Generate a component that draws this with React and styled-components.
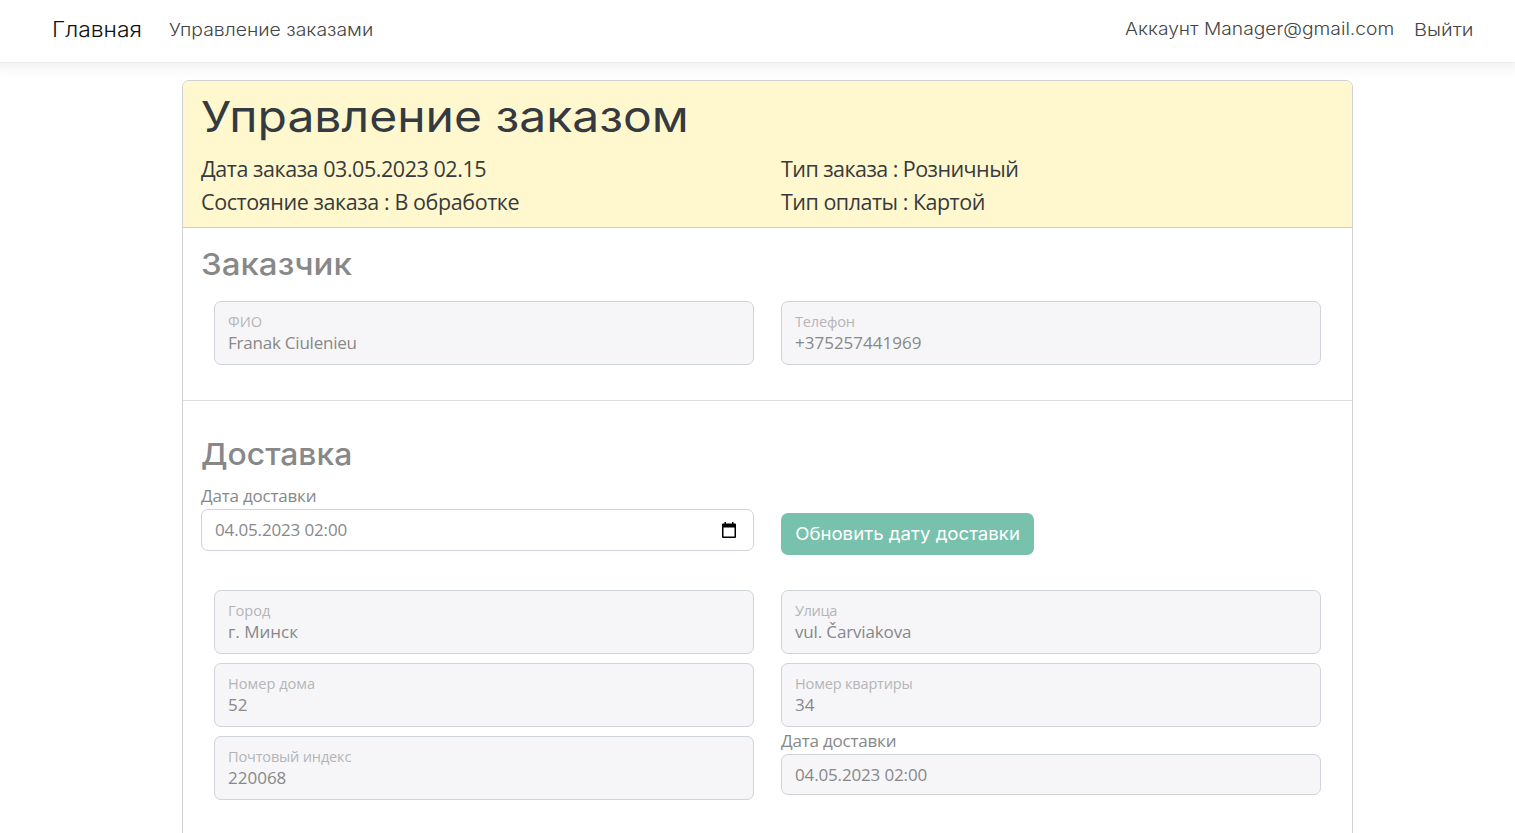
import React from "react";
import styled, { createGlobalStyle } from "styled-components";

const GlobalStyle = createGlobalStyle`
  * { box-sizing: border-box; }
  html, body { margin: 0; height: 833px; overflow: hidden; }
  body {
    background: #fff;
    color: #888;
    font-family: "Open Sans", "Noto Sans", sans-serif;
    font-size: 17px;
    line-height: 27px;
    white-space: nowrap;
  }
`;

const brandFont = `"Inter", "Open Sans", sans-serif`;

const Navbar = styled.header`
  display: flex;
  align-items: center;
  height: 63px;
  padding: 0 49.5px 3px 52px;
  border-bottom: 1px solid #ececec;
  box-shadow: 0 -4px 14px 8px rgba(0, 0, 0, 0.065);
  font-family: ${brandFont};
  font-weight: 300;
`;
const Brand = styled.a`
  margin-right: 34px;
  font-size: 21px;
  color: #111;
`;
const NavLink = styled.a`
  font-size: 17.5px;
  color: #444;
`;
const AccountLink = styled(NavLink)`
  margin-top: -1px;
`;
const NavRight = styled.nav`
  display: flex;
  gap: 43.3px;
  margin-left: auto;
`;

const Card = styled.main`
  width: 1171px;
  height: 780px;
  margin: 17px 0 0 182px;
  border: 1px solid #ced0d2;
  border-radius: 7px;
  background: #fff;
  overflow: hidden;
`;
const CardHeader = styled.div`
  height: 147px;
  padding: 8px 18px 9px;
  background: #fff8cf;
  border-bottom: 1px solid #d3ceac;
  color: #373a3c;
`;
const Title = styled.h1`
  margin: 0 0 9px;
  font: 400 43px/54px ${brandFont};
  color: #343a40;
`;
const Summary = styled.div`
  display: grid;
  grid-template-columns: 580px 1fr;
  font-size: 21.5px;
  line-height: 33px;
`;

const Section = styled.section`
  padding: ${(p) => p.$top}px 31px 35px 18px;
  border-bottom: 1px solid #dfdfdf;
`;
const Heading = styled.h2`
  margin: 0 0 9px;
  font: 460 30.5px/38px ${brandFont};
`;
const FieldGrid = styled.div`
  display: grid;
  grid-template-columns: 540px 540px;
  column-gap: 27px;
  row-gap: 9px;
  margin: ${(p) => p.$top}px 0 0 13px;
`;
const Field = styled.div`
  height: 64px;
  padding: 8px 13px;
  border: 1px solid #ced4da;
  border-radius: 7px;
  background: #f6f6f9;
`;
const FieldLabel = styled.div`
  font-size: 14.6px;
  line-height: 22px;
  color: #b5b5b6;
`;
const FieldValue = styled.div`
  line-height: 21px;
`;
const DateRow = styled.div`
  display: grid;
  grid-template-columns: 553px auto;
  column-gap: 27px;
  justify-content: start;
  align-items: start;
`;
const DateInput = styled.div`
  display: flex;
  align-items: center;
  justify-content: space-between;
  height: ${(p) => (p.$disabled ? 41 : 42)}px;
  padding: 0 16px 1px 13px;
  border: 1px solid #ced4da;
  border-radius: 7px;
  background: ${(p) => (p.$disabled ? "#f6f6f9" : "#fff")};
`;
const DateCell = styled.div`
  margin-top: ${(p) => p.$top || 0}px;
`;
const Button = styled.button`
  width: 253px;
  height: 42px;
  margin-top: 31px;
  padding: 0;
  border: 0;
  border-radius: 7px;
  background: #78c2ad;
  color: #fff;
  font: 400 17.5px/42px ${brandFont};
`;
const T = styled.span`
  letter-spacing: ${(p) => p.$ls || 0}px;
`;
const Wide = styled.span`
  display: inline-block;
  transform: scaleX(${(p) => p.$k});
  transform-origin: ${(p) => (p.$center ? "center" : "left")};
`;

const CalendarIcon = () => (
  <svg width="16" height="18" viewBox="0 0 16 18">
    <path
      d="M2 2.5h12a1 1 0 0 1 1 1V16a1 1 0 0 1-1 1H2a1 1 0 0 1-1-1V3.500a1 1 0 0 1 1-1z M2.500 6.500v9h11v-9z"
      fill="#000"
      fillRule="evenodd"
    />
    <path d="M3.500 1h1.500v2h-1.500z M11 1h1.500v2H11z" fill="#000" />
  </svg>
);

const TextField = ({ label, value, labelLs, valueLs }) => (
  <Field>
    <FieldLabel><T $ls={labelLs}>{label}</T></FieldLabel>
    <FieldValue><T $ls={valueLs}>{value}</T></FieldValue>
  </Field>
);

export default function App() {
  return (
    <>
      <GlobalStyle />
      <Navbar>
        <Brand><Wide $k={1.09}>Главная</Wide></Brand>
        <NavLink><Wide $k={1.108}>Управление заказами</Wide></NavLink>
        <NavRight>
          <AccountLink><Wide $k={1.098}>Аккаунт Manager@gmail.com</Wide></AccountLink>
          <NavLink><Wide $k={1.145}>Выйти</Wide></NavLink>
        </NavRight>
      </Navbar>
      <Card>
        <CardHeader>
          <Title><Wide $k={1.117}>Управление заказом</Wide></Title>
          <Summary>
            <div><T $ls={-0.45}>Дата заказа 03.05.2023 02.15</T></div>
            <div><T $ls={-0.55}>Тип заказа : Розничный</T></div>
            <div><T $ls={-0.41}>Состояние заказа : В обработке</T></div>
            <div><T $ls={-0.5}>Тип оплаты : Картой</T></div>
          </Summary>
        </CardHeader>
        <Section $top={17}>
          <Heading><Wide $k={1.084}>Заказчик</Wide></Heading>
          <FieldGrid $top={18}>
            <TextField label="ФИО" value="Franak Ciulenieu" valueLs={-0.22} />
            <TextField label="Телефон" value="+375257441969" labelLs={-0.2} />
          </FieldGrid>
        </Section>
        <Section $top={34}>
          <Heading><Wide $k={1.043}>Доставка</Wide></Heading>
          <DateRow>
            <DateCell>
              <T $ls={-0.2}>Дата доставки</T>
              <DateInput><T $ls={-0.15}>04.05.2023 02:00</T><CalendarIcon /></DateInput>
            </DateCell>
            <Button><Wide $center $k={1.065}>Обновить дату доставки</Wide></Button>
          </DateRow>
          <FieldGrid $top={35}>
            <TextField label="Город" value="г. Минск" />
            <TextField label="Улица" value="vul. Čarviakova" labelLs={-0.4} valueLs={-0.15} />
            <TextField label="Номер дома" value="52" />
            <TextField label="Номер квартиры" value="34" labelLs={-0.2} />
            <TextField label="Почтовый индекс" value="220068" labelLs={-0.2} />
            <DateCell $top={-9}>
              <T $ls={-0.2}>Дата доставки</T>
              <DateInput $disabled><T $ls={-0.15}>04.05.2023 02:00</T></DateInput>
            </DateCell>
          </FieldGrid>
        </Section>
      </Card>
    </>
  );
}
